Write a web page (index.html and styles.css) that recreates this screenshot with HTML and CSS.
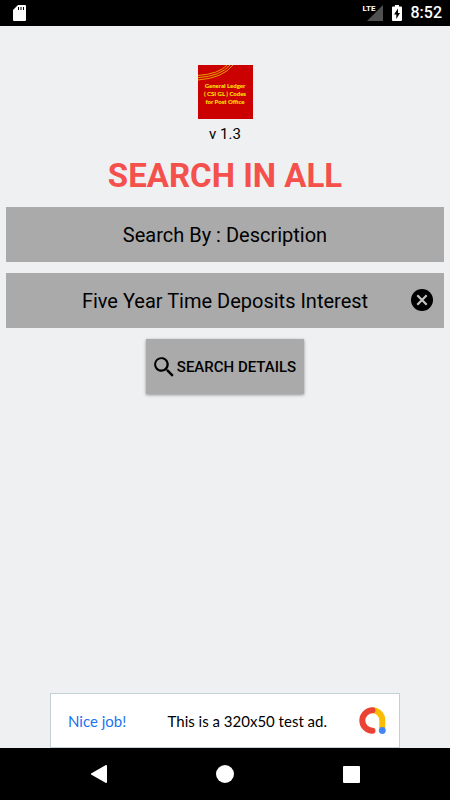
FILE: index.html
```html
<!DOCTYPE html>
<html lang="en">
<head>
<meta charset="utf-8">
<meta name="viewport" content="width=device-width, initial-scale=1">
<title>General Ledger Codes for Post Office</title>
<link rel="stylesheet" href="styles.css">
</head>
<body>
<header class="status">
  <svg class="status-card" width="13" height="16" viewBox="0 0 13 16" aria-hidden="true">
    <path fill="#fff" d="M5 0h7a1 1 0 0 1 1 1v14a1 1 0 0 1-1 1H1a1 1 0 0 1-1-1V5z"/>
    <path fill="#000" d="M5 2h1v3H5zM7.500 2h1v3h-1zM10 2h1v3h-1z"/>
  </svg>
  <div class="status-right">
    <div class="signal">
      <svg width="16" height="16" viewBox="0 0 16 16" aria-hidden="true"><path fill="#505050" d="M16 0v16H0z"/></svg>
      <span class="lte">LTE</span>
    </div>
    <svg width="10" height="16" viewBox="0 0 10 16" aria-hidden="true">
      <path fill="#fff" d="M3 0h4v1.500h2a1 1 0 0 1 1 1V15a1 1 0 0 1-1 1H1a1 1 0 0 1-1-1V2.500a1 1 0 0 1 1-1h2z"/>
      <path fill="#000" d="M6 3.500L2 9.500h2.300V14L8 8H6z"/>
    </svg>
    <time class="clock">8:52</time>
  </div>
</header>

<main class="content">
  <div class="logo">
    <svg class="logo-lines" width="55" height="16" viewBox="0 0 55 16" fill="none" stroke="#e8a000" stroke-width="1" aria-hidden="true">
      <path d="M0 10.500Q21 9 29 0M0 12.700Q23 11 32 0M0 15Q25 13 35 0"/>
    </svg>
    <span>General Ledger</span>
    <span>( CSI GL ) Codes</span>
    <span>for Post Office</span>
  </div>
  <p class="version">v 1.3</p>
  <h1 class="title">SEARCH IN ALL</h1>
  <form class="form">
    <select class="field" aria-label="Search by">
      <option>Search By : Description</option>
    </select>
    <div class="field-wrap">
      <input class="field" type="text" aria-label="Search text" value="Five Year Time Deposits Interest">
      <button class="clear" type="button" aria-label="Clear">
        <svg width="22" height="22" viewBox="0 0 22 22"><circle cx="11" cy="11" r="11"/><path d="M6.300 6.300l9.400 9.400M15.700 6.300l-9.400 9.400" stroke="#c4c4c0" stroke-width="2.200"/></svg>
      </button>
    </div>
    <button class="search" type="button">
      <svg width="20" height="20" viewBox="0 0 20 20" aria-hidden="true"><path d="M14.300 12.500h-1l-.3-.3a7.300 7.300 0 1 0-.8.8l.3.300v1l5.500 5.500 1.700-1.700zM7.300 12.500a5.200 5.200 0 1 1 0-10.400 5.200 5.200 0 0 1 0 10.400z"/></svg>
      <span>SEARCH DETAILS</span>
    </button>
  </form>
</main>

<aside class="ad">
  <span class="ad-praise">Nice job!</span>
  <span class="ad-text">This is a 320x50 test ad.</span>
  <svg class="ad-logo" width="27" height="27" viewBox="0 0 27 27" fill="none" stroke-width="6" stroke-linecap="round" aria-hidden="true">
    <path stroke="#fbbc04" d="M13.500 3.300A9.900 9.900 0 0 1 23.300 13.500V21" stroke-linecap="butt"/>
    <path stroke="#ea4335" d="M13.500 3.300a10.200 10.200 0 0 0 0 20.400"/>
    <circle cx="23.300" cy="23.500" r="3.400" fill="#4285f4"/>
  </svg>
</aside>

<nav class="nav">
  <button type="button" aria-label="Back"><svg width="18" height="18" viewBox="0 0 18 18"><path fill="#fff" stroke="#fff" stroke-width="2" stroke-linejoin="round" d="M2 9l14-8v16z"/></svg></button>
  <button type="button" aria-label="Home"><svg width="18" height="18" viewBox="0 0 18 18"><circle cx="9" cy="9" r="9" fill="#fff"/></svg></button>
  <button type="button" aria-label="Recent apps"><svg width="18" height="18" viewBox="0 0 18 18"><rect x="1" y="1" width="17" height="17" rx="1" fill="#fff"/></svg></button>
</nav>
</body>
</html>
```
FILE: styles.css
```css
* {
  box-sizing: border-box;
}

body {
  margin: 0;
  min-height: 100vh;
  display: flex;
  flex-direction: column;
  background: #eff0f2;
  color: #000;
  font-family: Roboto, "Liberation Sans", sans-serif;
}

button {
  border: 0;
  padding: 0;
  background: none;
  color: inherit;
  font: inherit;
}

svg {
  display: block;
}

.status {
  display: flex;
  align-items: center;
  justify-content: space-between;
  height: 26px;
  padding: 0 8px 0 13px;
  background: #000;
  color: #fff;
}

.status-right {
  display: flex;
  align-items: center;
  gap: 9px;
}

.signal {
  position: relative;
}

.lte {
  position: absolute;
  top: -1px;
  left: -4px;
  font: 700 8px/10px Roboto, sans-serif;
}

.clock {
  font-size: 16px;
  font-weight: 500;
  line-height: 26px;
}

.content {
  flex: 1;
  display: flex;
  flex-direction: column;
  align-items: center;
  padding: 39px 6px 0;
}

.logo {
  position: relative;
  display: flex;
  flex-direction: column;
  align-items: center;
  width: 55px;
  height: 54px;
  padding-top: 17px;
  background: #cb0000;
  color: #ffe600;
  font: 900 6px/8px Lato, sans-serif;
  white-space: nowrap;
}

.logo-lines {
  position: absolute;
  top: 0;
  left: 0;
}

.version {
  margin: 5px 0 0;
  font-size: 15px;
  line-height: 20px;
}

.title {
  margin: 12px 0 11px;
  color: #f4504c;
  font-size: 33px;
  font-weight: 700;
  line-height: 40px;
}

.form {
  display: flex;
  flex-direction: column;
  align-items: center;
  gap: 11px;
  width: 100%;
}

.field {
  display: block;
  width: 100%;
  height: 55px;
  margin: 0;
  padding: 0 40px;
  border: 0;
  border-radius: 0;
  appearance: none;
  background: #aaa;
  color: #000;
  font: 400 20px/28px Roboto, sans-serif;
  text-align: center;
  text-align-last: center;
}

.field-wrap {
  position: relative;
  width: 100%;
}

.clear {
  position: absolute;
  top: 16px;
  right: 11px;
}

.search {
  display: flex;
  align-items: center;
  justify-content: center;
  gap: 3px;
  height: 55px;
  padding: 0 8px;
  background: #aaa;
  box-shadow: 0 1px 3px rgba(0, 0, 0, 0.4);
  font-size: 15px;
  font-weight: 500;
}

.ad {
  display: flex;
  align-items: center;
  align-self: center;
  width: 350px;
  height: 55px;
  padding: 0 13px 0 17px;
  border: 1px solid #c3d0d5;
  background: #fff;
  font: 400 15px/20px Lato, sans-serif;
}

.ad-praise {
  color: #1a73f0;
}

.ad-text {
  margin-left: auto;
}

.ad-logo {
  margin-left: 32px;
}

.nav {
  display: grid;
  grid-template-columns: repeat(3, 1fr);
  height: 52px;
  padding: 0 36px;
  background: #000;
}

.nav button {
  display: flex;
  align-items: center;
  justify-content: center;
}
```
